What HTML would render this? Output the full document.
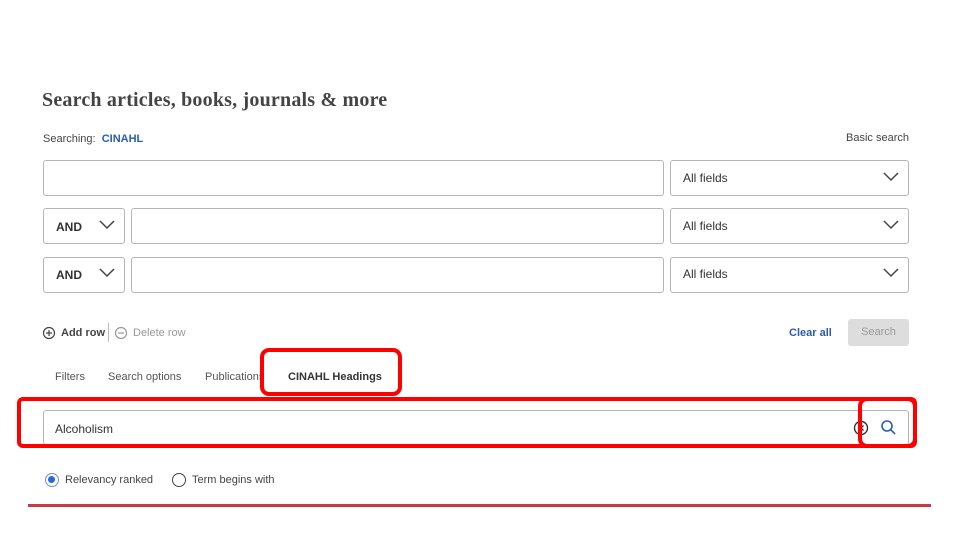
<!DOCTYPE html>
<html><head><style>
body{margin:0;width:962px;height:541px;background:#fff;position:relative;overflow:hidden;font-family:"Liberation Sans",sans-serif;color:#333}
.a{position:absolute}
.box{position:absolute;border:1px solid #b5b5b5;border-radius:3px;background:#fff;box-sizing:border-box}
.t{position:absolute;font-size:12px;color:#333}
.chev{position:absolute}
.red{position:absolute;border:4px solid #f00;border-radius:9px;box-sizing:border-box}
</style></head><body>
<div class="a" style="left:42px;top:89px;font-family:'Liberation Serif',serif;font-size:20px;font-weight:bold;color:#444;letter-spacing:0.2px">Search articles, books, journals &amp; more</div>
<div class="t" style="left:43px;top:133px;font-size:11px;color:#444">Searching: <span style="color:#2a5db0;font-weight:bold">&nbsp;CINAHL</span></div>
<div class="t" style="left:846px;top:132px;font-size:11px;color:#444">Basic search</div>

<div class="box" style="left:43px;top:160px;width:621px;height:36px"></div>
<div class="box" style="left:670px;top:160px;width:239px;height:36px"></div>
<div class="t" style="left:683px;top:171px">All fields</div>
<svg class="chev" style="left:883px;top:172px" width="16" height="10"><path d="M1 1l7 7 7-7" fill="none" stroke="#444" stroke-width="1.5"/></svg>

<div class="box" style="left:43px;top:208px;width:82px;height:36px"></div>
<div class="t" style="left:56px;top:220px;font-weight:bold;font-size:12px">AND</div>
<svg class="chev" style="left:99px;top:220px" width="16" height="10"><path d="M1 1l7 7 7-7" fill="none" stroke="#444" stroke-width="1.5"/></svg>
<div class="box" style="left:131px;top:208px;width:533px;height:36px"></div>
<div class="box" style="left:670px;top:208px;width:239px;height:36px"></div>
<div class="t" style="left:683px;top:219px">All fields</div>
<svg class="chev" style="left:883px;top:220px" width="16" height="10"><path d="M1 1l7 7 7-7" fill="none" stroke="#444" stroke-width="1.5"/></svg>

<div class="box" style="left:43px;top:257px;width:82px;height:36px"></div>
<div class="t" style="left:56px;top:268px;font-weight:bold">AND</div>
<svg class="chev" style="left:99px;top:268px" width="16" height="10"><path d="M1 1l7 7 7-7" fill="none" stroke="#444" stroke-width="1.5"/></svg>
<div class="box" style="left:131px;top:257px;width:533px;height:36px"></div>
<div class="box" style="left:670px;top:257px;width:239px;height:36px"></div>
<div class="t" style="left:683px;top:267px">All fields</div>
<svg class="chev" style="left:883px;top:268px" width="16" height="10"><path d="M1 1l7 7 7-7" fill="none" stroke="#444" stroke-width="1.5"/></svg>

<svg class="a" style="left:42px;top:326px" width="14" height="14"><circle cx="7" cy="7" r="5.5" fill="none" stroke="#444" stroke-width="1.2"/><path d="M4 7h6M7 4v6" stroke="#444" stroke-width="1.2"/></svg>
<div class="t" style="left:61px;top:327px;font-size:11px;font-weight:bold;color:#444">Add row</div>
<div class="a" style="left:108px;top:323px;width:1px;height:19px;background:#bbb"></div>
<svg class="a" style="left:114px;top:326px" width="14" height="14"><circle cx="7" cy="7" r="5.5" fill="none" stroke="#999" stroke-width="1.2"/><path d="M4 7h6" stroke="#999" stroke-width="1.2"/></svg>
<div class="t" style="left:133px;top:327px;font-size:11px;color:#999">Delete row</div>
<div class="t" style="left:789px;top:327px;font-size:11px;font-weight:bold;color:#2a5db0">Clear all</div>
<div class="a" style="left:848px;top:319px;width:61px;height:27px;background:#ddd;border-radius:3px;color:#999;font-size:11px;text-align:center;line-height:27px">Search</div>

<div class="t" style="left:55px;top:371px;font-size:11px;color:#555">Filters</div>
<div class="t" style="left:108px;top:371px;font-size:11px;color:#555">Search options</div>
<div class="t" style="left:205px;top:371px;font-size:11px;color:#555">Publications</div>
<div class="t" style="left:288px;top:371px;font-size:11px;font-weight:bold;color:#333">CINAHL Headings</div>
<div class="red" style="left:260px;top:348px;width:142px;height:48px;background:transparent"></div>

<div class="box" style="left:43px;top:410px;width:866px;height:35px"></div>
<div class="t" style="left:55px;top:422px">Alcoholism</div>
<svg class="a" style="left:853px;top:420px" width="16" height="16"><circle cx="8" cy="8" r="6.5" fill="none" stroke="#333" stroke-width="1.4"/><path d="M5.5 5.5l5 5M10.5 5.5l-5 5" stroke="#333" stroke-width="1.4"/></svg>
<svg class="a" style="left:880px;top:419px" width="17" height="17"><circle cx="7" cy="7" r="5" fill="none" stroke="#2a5db0" stroke-width="1.6"/><path d="M10.6 10.6l4.5 4.5" stroke="#2a5db0" stroke-width="1.6"/></svg>
<div class="red" style="left:17px;top:397px;width:900px;height:51px;border-radius:6px"></div>
<div class="red" style="left:858px;top:397px;width:59px;height:51px"></div>

<div class="a" style="left:45px;top:473px;width:14px;height:14px;border-radius:50%;border:1.5px solid #6a8fd0;box-sizing:border-box;background:#fff"><div style="margin:2px;width:7px;height:7px;border-radius:50%;background:#2a6ad0"></div></div>
<div class="t" style="left:65px;top:474px;font-size:11px;color:#444">Relevancy ranked</div>
<div class="a" style="left:172px;top:473px;width:14px;height:14px;border-radius:50%;border:1.5px solid #444;box-sizing:border-box"></div>
<div class="t" style="left:192px;top:474px;font-size:11px;color:#444">Term begins with</div>

<div class="a" style="left:28px;top:504px;width:903px;height:3px;background:#c53a43"></div>
</body></html>
